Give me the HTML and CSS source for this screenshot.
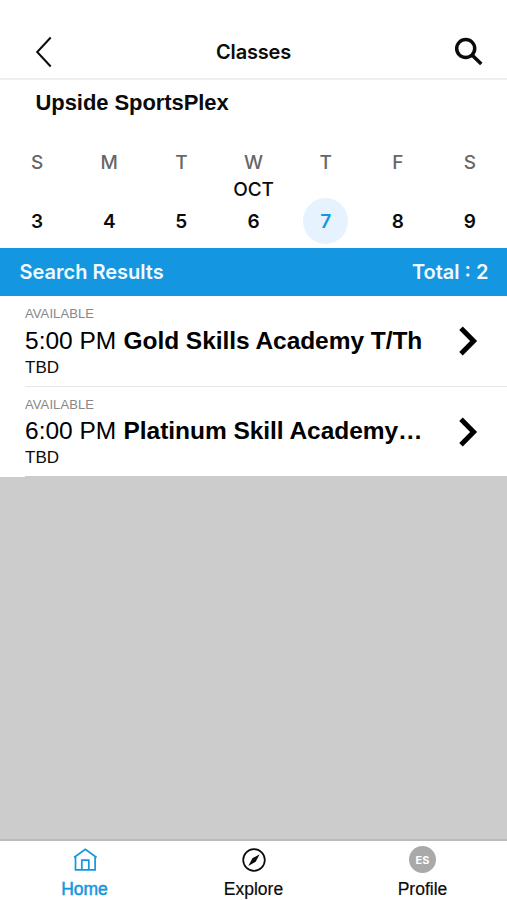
FILE: index.html
```html
<!DOCTYPE html>
<html lang="en">
<head>
<meta charset="utf-8">
<title>Classes</title>
<link rel="stylesheet" href="styles.css">
</head>
<body>
<div class="app">
  <header class="header">
    <svg class="back" viewBox="0 0 18 32"><path d="M15.7 1.5 2.2 16l13.5 14.5"/></svg>
    <h1 class="title">Classes</h1>
    <svg class="search" viewBox="0 0 30 30"><circle cx="11.7" cy="11.5" r="9"/><path d="m18 18 9.3 9"/></svg>
  </header>
  <h2 class="venue"><span>Upside SportsPlex</span></h2>
  <section class="week">
    <div class="day"><span class="name">S</span><span class="month"></span><span class="date">3</span></div>
    <div class="day"><span class="name">M</span><span class="month"></span><span class="date">4</span></div>
    <div class="day"><span class="name">T</span><span class="month"></span><span class="date">5</span></div>
    <div class="day"><span class="name">W</span><span class="month">OCT</span><span class="date">6</span></div>
    <div class="day"><span class="name">T</span><span class="month"></span><span class="date selected">7</span></div>
    <div class="day"><span class="name">F</span><span class="month"></span><span class="date">8</span></div>
    <div class="day"><span class="name">S</span><span class="month"></span><span class="date">9</span></div>
  </section>
  <div class="summary"><span class="results">Search Results</span><span class="total">Total : 2</span></div>
  <main class="list">
    <article class="item">
      <div class="info">
        <div class="status">AVAILABLE</div>
        <div class="class-line"><span class="time">5:00 PM</span><b class="gold">Gold Skills Academy T/Th</b></div>
        <div class="staff">TBD</div>
      </div>
      <svg class="chevron" viewBox="0 0 20 30"><path d="m3 2.3 12.6 12.7L3 27.7"/></svg>
    </article>
    <article class="item">
      <div class="info">
        <div class="status">AVAILABLE</div>
        <div class="class-line"><span class="time">6:00 PM</span><b class="platinum">Platinum Skill Academy…</b></div>
        <div class="staff">TBD</div>
      </div>
      <svg class="chevron" viewBox="0 0 20 30"><path d="m3 2.3 12.6 12.7L3 27.7"/></svg>
    </article>
  </main>
  <nav class="tabs">
    <a class="tab active">
      <svg class="icon" viewBox="0 0 28 28"><path d="M3 11.5 14.3 3.3l11.3 8.2M4.5 10.8v13.1h19.6V10.8M10.8 23.5v-9.3h7v9.3"/></svg>
      <span class="home">Home</span>
    </a>
    <a class="tab">
      <svg class="icon" viewBox="0 0 28 28"><circle cx="14" cy="14" r="10.8"/><path class="needle" d="m19.7 8.2-4 7.6-7.4 4.2 4.1-7.7z"/></svg>
      <span class="explore">Explore</span>
    </a>
    <a class="tab">
      <span class="avatar">ES</span>
      <span class="profile">Profile</span>
    </a>
  </nav>
</div>
</body>
</html>
```

FILE: styles.css
```css
* { box-sizing: border-box; }
body { margin: 0; background: #fff; color: #0b0b0b; font-family: "Liberation Sans", Arial, sans-serif; }
svg { display: block; fill: none; stroke: currentColor; }
.app { width: 507px; height: 900px; display: flex; flex-direction: column; background: #ccc; overflow: hidden; }
.header { height: 80px; flex: none; padding: 24px 23px 0 35px; display: grid; grid-template-columns: 48px 1fr 60px; align-items: center; background: #fff; border-bottom: 2px solid #eee; }
.back { width: 18px; height: 32px; margin-top: 1px; stroke-width: 2; }
.title { margin: 2px 0 0; font: 600 20px/28px Inter, sans-serif; letter-spacing: -.2px; text-align: center; }
.search { width: 30px; height: 30px; margin-top: 2px; justify-self: end; stroke-width: 3.5; }
.venue { height: 58px; flex: none; margin: 0; padding: 8px 35.5px 0; background: #fff; font-size: 22px; line-height: 29px; letter-spacing: -.07px; }
.week { height: 109.5px; flex: none; padding: 10px 1px 0; display: grid; grid-template-columns: repeat(7, 1fr); background: #fff; }
.day { display: flex; flex-direction: column; align-items: center; font: 600 19px/28px Inter, sans-serif; }
.name { height: 28px; line-height: 30px; color: #666; font-weight: 500; }
.month { height: 22px; line-height: 27px; font-weight: 500; letter-spacing: -.2px; }
.date { width: 45px; height: 46px; line-height: 47px; border-radius: 50%; text-align: center; }
.selected { color: #1496e1; background: #e6f3fe; }
.summary { height: 48.5px; flex: none; padding: 1px 18.5px 0 19.5px; display: flex; align-items: center; justify-content: space-between; background: #1496e1; color: #f1faff; font: 600 20px/28px Inter, sans-serif; }
.list { flex: none; background: #fff; }
.item { height: 90.5px; margin-left: 25px; padding: 8px 29px 0 0; display: flex; justify-content: space-between; border-bottom: 1px solid #e6e6e6; }
.item:last-child { border-color: #ccc; }
.status { height: 19px; line-height: 20px; font-size: 13px; color: #888; letter-spacing: .1px; }
.class-line { height: 34px; line-height: 35px; font-size: 24.5px; white-space: nowrap; color: #000; }
.item:last-child .class-line { line-height: 34px; }
.time { display: inline-block; width: 98.5px; }
.gold { letter-spacing: -.05px; }
.platinum { letter-spacing: -.04px; }
.staff { line-height: 21px; font-size: 17px; }
.item:last-child .staff { line-height: 20px; }
.chevron { width: 20px; height: 30px; margin-top: 22px; stroke: #000; stroke-width: 5; }
.tabs { height: 61px; flex: none; margin-top: auto; padding-top: 5px; display: grid; grid-template-columns: repeat(3, 1fr); background: #fff; border-top: 2px solid #bbb; }
.tab { display: flex; flex-direction: column; align-items: center; font-size: 17.5px; line-height: 20px; gap: 5px; -webkit-text-stroke: .2px currentColor; }
.active { color: #1496e1; -webkit-text-stroke-width: .5px; }
.icon { width: 28px; height: 28px; stroke-width: 1.7; }
.needle { fill: currentColor; stroke: none; }
.avatar { width: 27px; height: 27px; margin-bottom: 1px; border-radius: 50%; background: #a9a9a9; color: #fff; font: 700 11px/28px Inter, sans-serif; text-align: center; -webkit-text-stroke-width: 0; }
```
